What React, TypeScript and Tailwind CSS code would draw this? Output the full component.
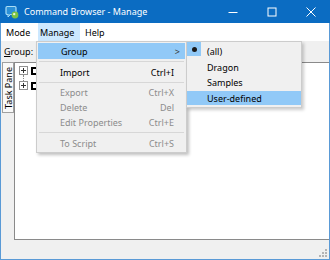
import React from "react";

function TitleIcon() {
  return (
    <svg width="14" height="14" viewBox="0 0 14 14">
      <rect x="1" y="1.5" width="10" height="8" rx="1.2" fill="#2b8fd6" stroke="#a9dcf5" strokeWidth="1.2" />
      <path d="M3 9.5 L3 12 L5.5 9.5" fill="#2b8fd6" stroke="#a9dcf5" strokeWidth="1" />
      <circle cx="10" cy="10" r="3.4" fill="#7cc243" />
      <circle cx="9.2" cy="9.1" r="1.2" fill="#e9f7d8" />
    </svg>
  );
}

function MenuItem({
  label,
  shortcut,
  disabled,
  arrow,
  h,
}: {
  label: string;
  shortcut?: string;
  disabled?: boolean;
  arrow?: boolean;
  h: string;
}) {
  return (
    <div className={`${h} flex items-center pl-[23px] pr-[12px] ${disabled ? "text-[#8c8c8c]" : "text-black"}`}>
      <span>{label}</span>
      <span className="ml-auto">{shortcut}</span>
      {arrow && <span className="ml-auto mr-[-7px] text-[9px] text-[#333]">&gt;</span>}
    </div>
  );
}

function Sep() {
  return (
    <div className="h-[5px] flex items-center mx-[2px]">
      <div className="h-[1px] w-full bg-[#d7d7d7]" />
    </div>
  );
}

function Expander() {
  return (
    <div className="w-[9px] h-[9px] border border-[#919191] bg-white relative">
      <div className="absolute left-[1px] top-[3px] w-[5px] h-[1px] bg-[#333]" />
      <div className="absolute left-[3px] top-[1px] w-[1px] h-[5px] bg-[#333]" />
    </div>
  );
}

export default function App() {
  return (
    <div className="w-[330px] h-[260px] flex flex-col relative overflow-hidden font-['Noto_Sans',sans-serif] text-[9px] leading-none text-black bg-[#f0f0f0]">
      {/* Title bar */}
      <div className="h-[23px] bg-[#0b6cc2] flex items-center text-white shrink-0">
        <div className="ml-[5px] mt-[1px]">
          <TitleIcon />
        </div>
        <span className="ml-[5px] text-[9px]">Command Browser - Manage</span>
        <div className="ml-auto flex h-full">
          <div className="w-[39px] h-full flex items-center justify-center">
            <svg width="10" height="10" viewBox="0 0 10 10">
              <path d="M0.5 5.5 H9.5" stroke="white" strokeWidth="1" />
            </svg>
          </div>
          <div className="w-[39px] h-full flex items-center justify-center">
            <svg width="10" height="10" viewBox="0 0 10 10">
              <rect x="1" y="1" width="8" height="8" fill="none" stroke="white" strokeWidth="1" />
            </svg>
          </div>
          <div className="w-[39px] h-full flex items-center justify-center">
            <svg width="10" height="10" viewBox="0 0 10 10">
              <path d="M0.5 0.5 L9.5 9.5 M9.5 0.5 L0.5 9.5" stroke="white" strokeWidth="1" />
            </svg>
          </div>
        </div>
      </div>

      <div className="flex-1 flex flex-col border-x border-b border-[#5a9ad6]">
        {/* Menu bar */}
        <div className="h-[18px] bg-white flex items-stretch shrink-0">
          <div className="ml-[5px] w-[24px] flex items-center">Mode</div>
          <div className="ml-[8px] w-[42px] bg-[#cce8ff] flex items-center pl-[2px]">Manage</div>
          <div className="ml-[5px] flex items-center">Help</div>
        </div>

        {/* Toolbar row */}
        <div className="h-[21px] flex items-center shrink-0">
          <span className="ml-[3px]">
            <span className="underline underline-offset-[1px]">G</span>roup:
          </span>
        </div>

        {/* Main */}
        <div className="flex-1 flex min-h-0">
          <div className="w-[13px] flex flex-col shrink-0">
            <div className="ml-[1px] w-[12px] h-[51px] bg-[#f9f9f9] border border-[#a0a0a0] flex items-center justify-center">
              <span className="[writing-mode:vertical-rl] rotate-180 leading-none">Task Pane</span>
            </div>
          </div>
          <div className="flex-1 bg-white border-l border-t border-b border-[#8a8a8a] relative">
            <div className="absolute left-[4px] top-[3px] flex flex-col">
              <div className="flex items-center h-[9px]">
                <Expander />
                <div className="ml-[3px] w-[9px] h-[8px] border-2 border-black" />
              </div>
              <div className="ml-[4px] h-[6px] border-l border-dotted border-[#888]" />
              <div className="flex items-center h-[9px]">
                <Expander />
                <div className="ml-[3px] w-[9px] h-[8px] border-2 border-black" />
              </div>
            </div>
          </div>
        </div>

        {/* Status bar */}
        <div className="h-[19px] shrink-0 flex items-end justify-end">
          <svg width="9" height="9" viewBox="0 0 9 9" className="mb-[1px] mr-[1px]">
            <g fill="#b4b4b4">
              <rect x="6" y="0" width="2" height="2" />
              <rect x="3" y="3" width="2" height="2" />
              <rect x="6" y="3" width="2" height="2" />
              <rect x="0" y="6" width="2" height="2" />
              <rect x="3" y="6" width="2" height="2" />
              <rect x="6" y="6" width="2" height="2" />
            </g>
          </svg>
        </div>
      </div>

      {/* Manage dropdown */}
      <div className="absolute left-[36px] top-[41px] w-[151px] bg-[#f0f0f0] border border-[#cccccc] shadow-[2px_2px_3px_rgba(0,0,0,0.25)] pt-[1px] pb-[1px]">
        <div className="mx-[1px] bg-[#91c9f7]">
          <MenuItem label="Group" arrow h="h-[16px]" />
        </div>
        <Sep />
        <MenuItem label="Import" shortcut="Ctrl+I" h="h-[16px]" />
        <Sep />
        <MenuItem label="Export" shortcut="Ctrl+X" disabled h="h-[15px]" />
        <MenuItem label="Delete" shortcut="Del" disabled h="h-[15px]" />
        <MenuItem label="Edit Properties" shortcut="Ctrl+E" disabled h="h-[15px]" />
        <Sep />
        <MenuItem label="To Script" shortcut="Ctrl+S" disabled h="h-[16px]" />
      </div>

      {/* Group submenu */}
      <div className="absolute left-[186px] top-[41px] w-[116px] bg-[#f0f0f0] border border-[#cccccc] shadow-[2px_2px_3px_rgba(0,0,0,0.2)] pt-[1px] pb-[2px]">
        <div className="h-[16px] flex items-center pl-[20px] relative">
          <div className="absolute left-0 top-[-1px] w-[14px] h-[14px] bg-[#91c9f7] flex items-center justify-center">
            <div className="w-[5px] h-[5px] rounded-full bg-[#1a1a1a]" />
          </div>
          (all)
        </div>
        <div className="h-[16px] flex items-center pl-[20px]">Dragon</div>
        <div className="h-[15px] flex items-center pl-[20px]">Samples</div>
        <div className="mt-[1px] h-[14px] flex items-center pl-[20px] bg-[#91c9f7]">User-defined</div>
      </div>
    </div>
  );
}
